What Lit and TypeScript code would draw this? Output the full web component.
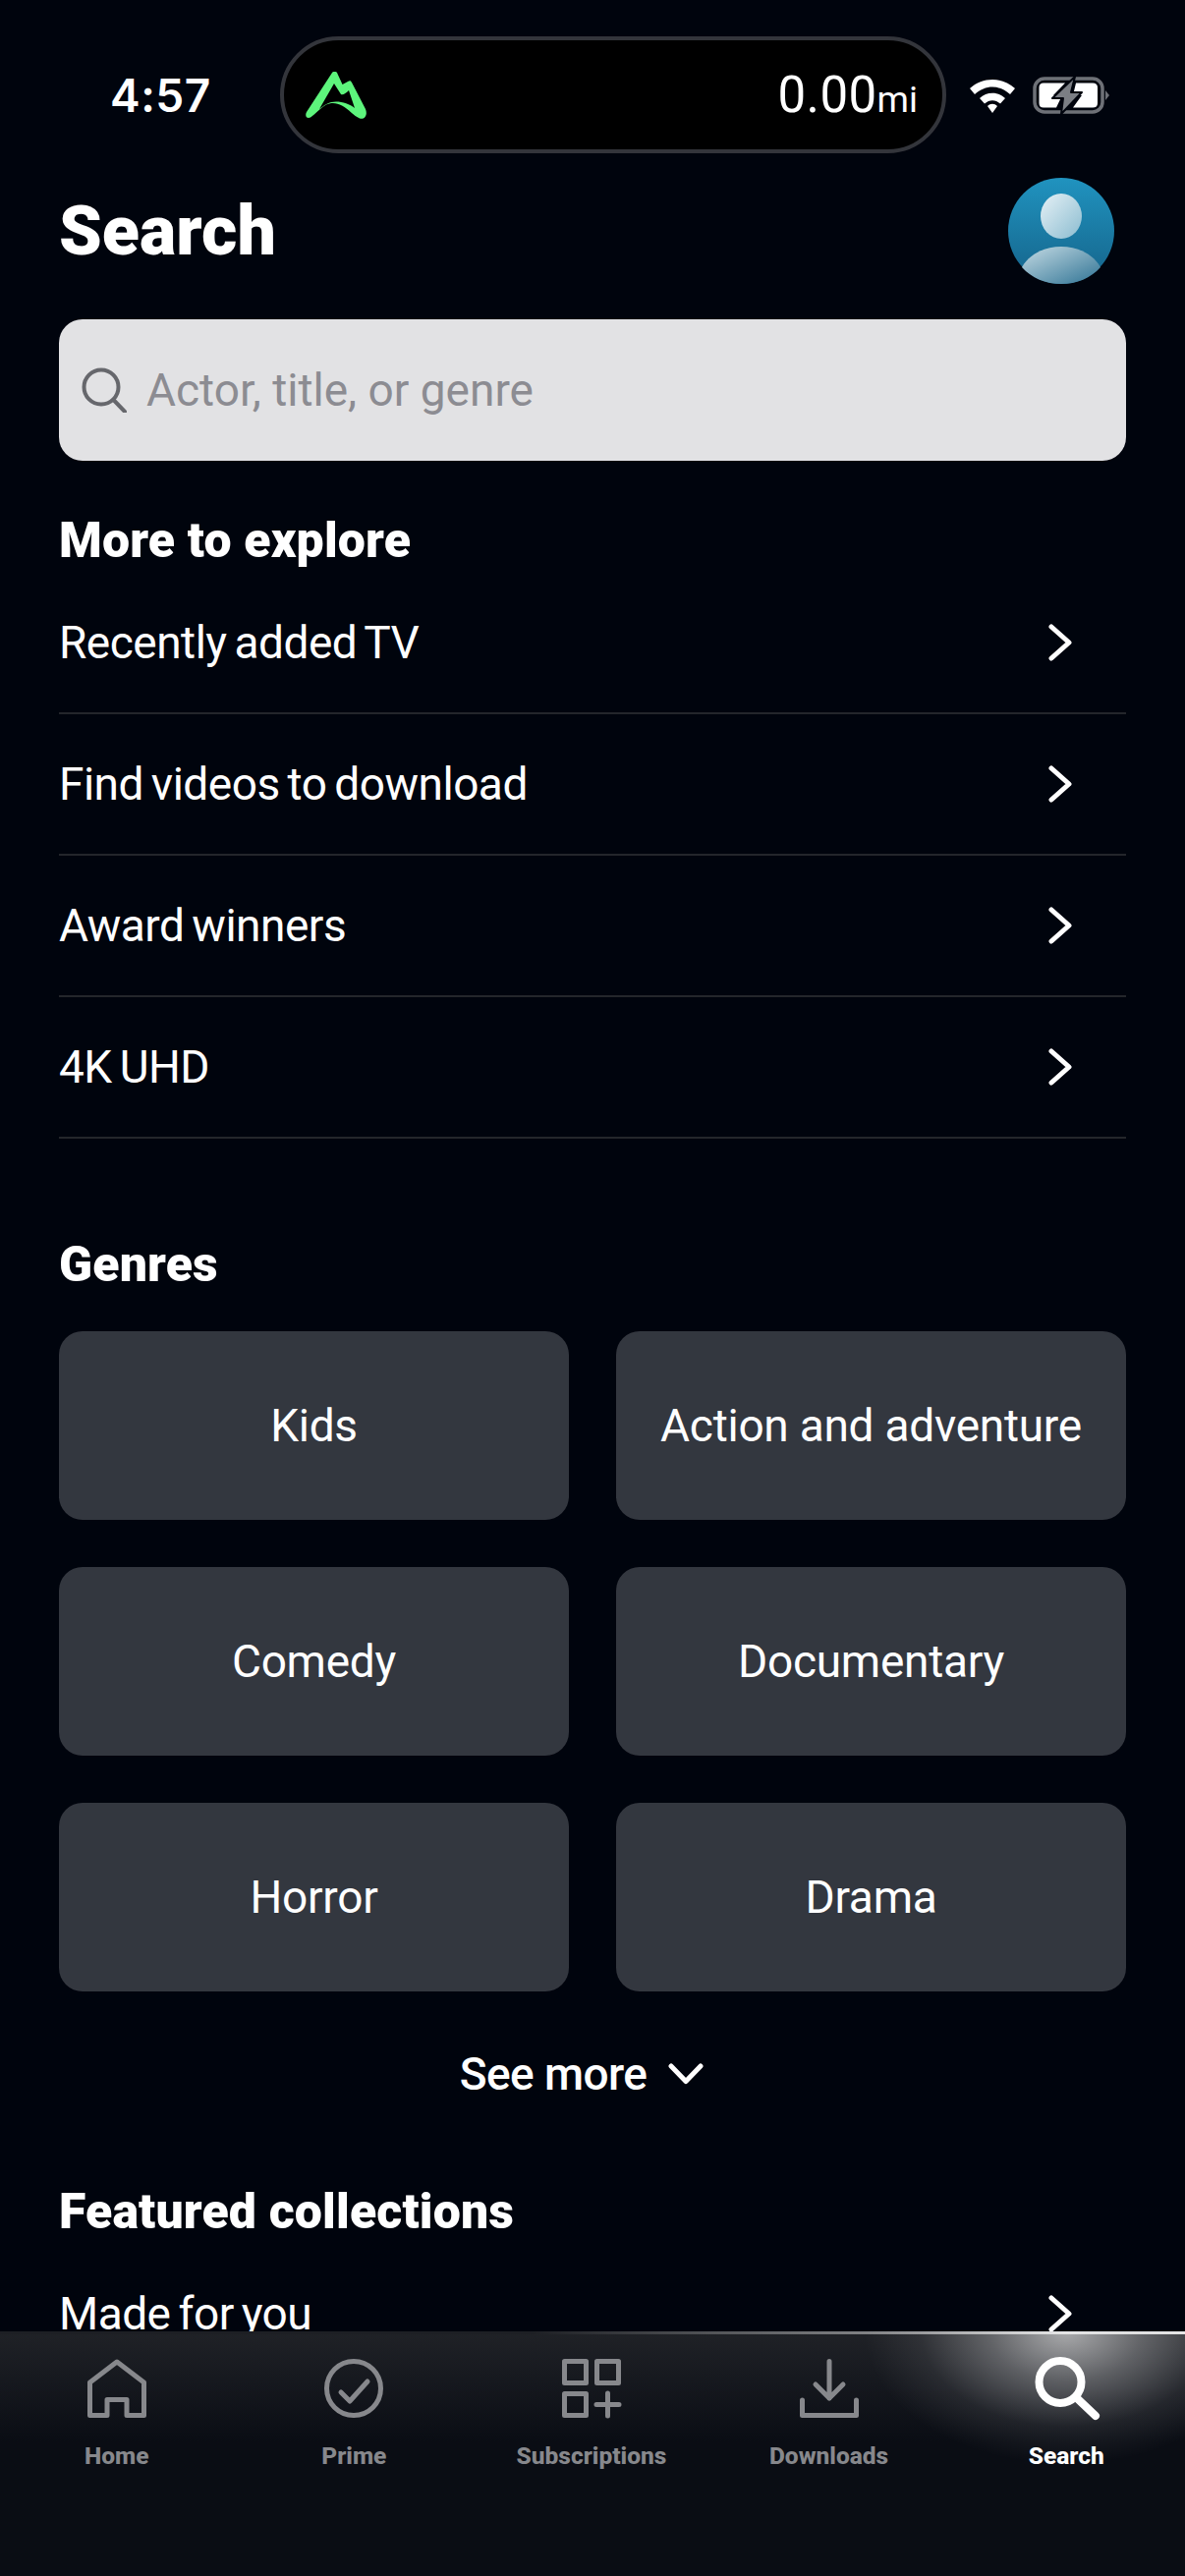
import { LitElement, html, css, svg } from "lit";
import { customElement } from "lit/decorators.js";

const chevron = html`<svg class="chev" viewBox="0 0 24 38" width="24" height="38"><path d="M3 3 L21 19 L3 35" fill="none" stroke="#fff" stroke-width="5" stroke-linecap="round" stroke-linejoin="round"/></svg>`;

const tabs = [
  { label: "Home", icon: svg`<path d="M30 3 L2.5 24 V57.5 H20 V41.5 H40 V57.5 H57.5 V24 Z" fill="none" stroke="currentColor" stroke-width="5" stroke-linejoin="round"/>` },
  { label: "Prime", icon: svg`<circle cx="30" cy="30" r="27.5" fill="none" stroke="currentColor" stroke-width="5"/><path d="M17 34 L26 43 L44 23" fill="none" stroke="currentColor" stroke-width="5" stroke-linecap="round" stroke-linejoin="round"/>` },
  { label: "Subscriptions", icon: svg`<g fill="none" stroke="currentColor" stroke-width="5" stroke-linejoin="round"><rect x="2.5" y="2.5" width="22" height="22"/><rect x="35.5" y="2.5" width="22" height="22"/><rect x="2.5" y="35.5" width="22" height="22"/><path d="M46.5 35 V58 M35 46.5 H58" stroke-linecap="round"/></g>` },
  { label: "Downloads", icon: svg`<g fill="none" stroke="currentColor" stroke-width="5" stroke-linecap="round" stroke-linejoin="round"><path d="M30 2.5 V40 M16 26 L30 40 L44 26"/><path d="M2.5 42 V57.5 H57.5 V42"/></g>` },
  { label: "Search", icon: svg`<g fill="none" stroke="currentColor" stroke-width="8" stroke-linecap="round"><circle cx="24" cy="23.5" r="21.5"/><path d="M41 40 L60 58"/></g>`, active: true },
];

@customElement("app-root")
export class AppRoot extends LitElement {
  static styles = css`
    :host { display: block; width: 1206px; height: 2622px; overflow: hidden; background: #00040d; color: #fff; font-family: "Roboto", "Noto Sans", sans-serif; position: relative; }
    .status { height: 156px; display: flex; align-items: center; box-sizing: border-box; padding: 37px 0 0 0; }
    .time { width: 285px; box-sizing: border-box; padding-left: 112px; font-size: 46px; font-weight: 600; font-family: "Inter", sans-serif; letter-spacing: 0.5px; }
    .island { width: 678px; height: 119px; box-sizing: border-box; border: 4px solid #33353b; border-radius: 60px; background: #000; display: flex; align-items: center; justify-content: space-between; padding: 0 25px 0 22px; }
    .dist { font-size: 51px; font-weight: 400; letter-spacing: 0.4px; }
    .dist small { font-size: 37px; font-weight: 400; letter-spacing: 0; }
    .sys { display: flex; align-items: center; gap: 17px; margin-left: 23px; }
    .head { display: flex; justify-content: space-between; align-items: center; height: 108px; margin-top: 25px; padding: 0 72px 0 60px; }
    h1 { margin: 0; font-size: 70px; font-weight: 900; line-height: 1; }
    .search { margin: 36px 60px 0; height: 144px; border-radius: 24px; background: #e2e2e4; display: flex; align-items: center; padding-left: 23px; gap: 20px; color: #8c8c92; font-size: 46px; font-weight: 400; }
    h2 { margin: 0; font-size: 50px; font-weight: 900; line-height: 54px; letter-spacing: 0.15px; }
    .sec1 { padding: 54px 60px 0; }
    .row { height: 144px; box-sizing: border-box; border-bottom: 2px solid #24262b; display: flex; align-items: center; justify-content: space-between; font-size: 46px; font-weight: 400; letter-spacing: -0.5px; word-spacing: -3px; padding-right: 55px; }
    .rows { margin-top: 6px; }
    .sec2 { padding: 101px 60px 0; }
    .grid { display: grid; grid-template-columns: 1fr 1fr; gap: 48px; margin-top: 41px; }
    .tile { height: 192px; border-radius: 24px; background: #33373f; display: flex; align-items: center; justify-content: center; font-size: 46px; font-weight: 400; letter-spacing: -0.25px; }
    .more { display: flex; justify-content: center; align-items: center; gap: 22px; margin-top: 57px; height: 54px; font-size: 46px; font-weight: 500; letter-spacing: -0.6px; padding-right: 22px; }
    .sec3 { padding: 86px 60px 0; }
    .nav { position: absolute; left: -2px; right: 0; top: 2373px; bottom: 0; background: linear-gradient(#202227, #0a0d14 45%); display: flex; align-items: flex-start; }
    .nav::before { content: ""; position: absolute; left: 0; right: 0; top: 0; height: 3px; background: linear-gradient(90deg, #1d1f24 45%, #e0e0e0 100%); }
    .glow { position: absolute; left: 860px; top: 0; right: 0; height: 150px; background: radial-gradient(ellipse 205px 135px at 227px 0, rgba(255,255,255,.62), rgba(255,255,255,.3) 38%, rgba(255,255,255,.08) 72%, rgba(255,255,255,0) 100%); }
    .tab { position: relative; flex: 1; display: flex; flex-direction: column; align-items: center; color: #87888c; padding-top: 28px; }
    .tab svg { width: 60px; height: 60px; display: block; overflow: visible; }
    .tab span { margin-top: 24px; font-size: 24.5px; font-weight: 800; line-height: 30px; white-space: nowrap; }
    .tab.on { color: #fff; }
  `;

  render() {
    return html`
      <div class="status">
        <div class="time">4:57</div>
        <div class="island">
          <svg viewBox="0 0 62 48" width="62" height="48"><path d="M27 1 C28 -0.5 31 -0.5 32 1 L37.500 13 L43 10 C45 9 46 9 47 11 L61 38 C63.500 44 60 49 55 47.500 C49 45 44 38 37 34.500 C32 31.500 26 31 21 33.500 C15 37 10 43 5 46.500 C1 48 -1 45 1 41 Z M29 12 L14 38 C19 34 24 30.500 31 30.500 C38 30.500 45 33 50 37 L44 19 C41 22 38 24 36 23 Z" fill="#5df57c" fill-rule="evenodd"/></svg>
          <div class="dist">0.00<small>mi</small></div>
        </div>
        <div class="sys">
          <svg viewBox="0 0 48 36" width="48" height="36"><path d="M1 11 C14 -1 34 -1 47 11 L42 17 C31 7 17 7 6 17 Z M11 21 C18 14 30 14 37 21 L32 26.500 C27 22 21 22 16 26.500 Z M19 29 C22 26 26 26 29 29 L24 36 Z" fill="#fff"/></svg>
          <svg viewBox="0 0 78 40" width="78" height="40"><rect x="2" y="3" width="69" height="34" rx="10" fill="none" stroke="#6e7177" stroke-width="3.500"/><path d="M11 7.500 H33 L21 20 H30 L24 32.500 H11 Q6.500 32.500 6.500 28 V12 Q6.500 7.500 11 7.500 Z M44 7.500 H61 Q66 7.500 66 12 V28 Q66 32.500 61 32.500 H41 L50 20 H41 Z" fill="#fff"/><path d="M43 1 L20 23 H31 L29 39 L50 17 H39 Z" fill="#7b7e84" stroke="#00040d" stroke-width="2" stroke-linejoin="round"/><path d="M74 15 L78 20 L74 25 Z" fill="#6e7177"/></svg>
        </div>
      </div>
      <div class="head">
        <h1>Search</h1>
        <svg viewBox="0 0 108 108" width="108" height="108">
          <defs>
            <linearGradient id="bg" x1="0" y1="0" x2="0" y2="1"><stop offset="0" stop-color="#2093bf"/><stop offset="1" stop-color="#15638a"/></linearGradient>
            <linearGradient id="fg" x1="0" y1="0" x2="1" y2="1"><stop offset="0" stop-color="#e6f1f6"/><stop offset="1" stop-color="#8bbcd0"/></linearGradient>
            <linearGradient id="fg2" x1="0" y1="0" x2="1" y2="1"><stop offset="0" stop-color="#c5dbe4"/><stop offset="1" stop-color="#2f7394"/></linearGradient>
          </defs>
          <circle cx="54" cy="54" r="54" fill="url(#bg)"/>
          <ellipse cx="54" cy="39" rx="21" ry="23" fill="url(#fg)"/>
          <path d="M14 91 C22 77 38 70 54 70 C70 70 86 77 94 91 C84 102 70 108 54 108 C38 108 24 102 14 91 Z" fill="url(#fg2)"/>
        </svg>
      </div>
      <div class="search">
        <svg viewBox="0 0 46 46" width="46" height="46"><g fill="none" stroke="#66676c" stroke-width="4" stroke-linecap="round"><circle cx="20" cy="20" r="17.500"/><path d="M32.500 33 L44 45"/></g></svg>
        <span>Actor, title, or genre</span>
      </div>
      <div class="sec1">
        <h2>More to explore</h2>
        <div class="rows">
          ${["Recently added TV", "Find videos to download", "Award winners", "4K UHD"].map((t) => html`<div class="row"><span>${t}</span>${chevron}</div>`)}
        </div>
      </div>
      <div class="sec2">
        <h2>Genres</h2>
        <div class="grid">
          ${["Kids", "Action and adventure", "Comedy", "Documentary", "Horror", "Drama"].map((t) => html`<div class="tile">${t}</div>`)}
        </div>
        <div class="more"><span>See more</span><svg viewBox="0 0 36 22" width="36" height="22"><path d="M3 3 L18 18.500 L33 3" fill="none" stroke="#fff" stroke-width="5" stroke-linecap="round" stroke-linejoin="round"/></svg></div>
      </div>
      <div class="sec3">
        <h2>Featured collections</h2>
        <div class="rows"><div class="row"><span>Made for you</span>${chevron}</div></div>
      </div>
      <div class="nav">
        <div class="glow"></div>
        ${tabs.map((t) => html`<div class="tab ${t.active ? "on" : ""}"><svg viewBox="0 0 60 60">${t.icon}</svg><span>${t.label}</span></div>`)}
      </div>
    `;
  }
}
